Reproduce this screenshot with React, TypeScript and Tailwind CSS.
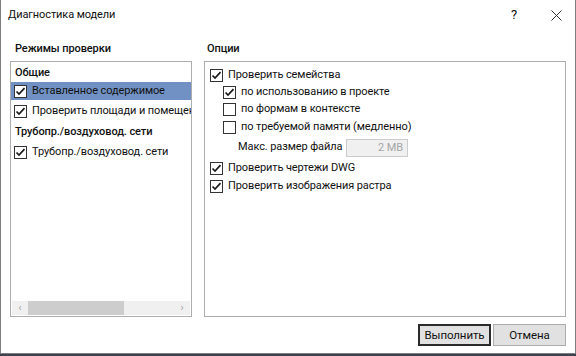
import React from "react";

const font = { fontFamily: 'Roboto, "Noto Sans", Arial, sans-serif' };

function Check({ checked }: { checked: boolean }) {
  return (
    <span className="w-[13px] h-[13px] border border-[#333333] bg-white flex items-center justify-center shrink-0">
      {checked && (
        <svg width="11" height="11" viewBox="0 0 11 11">
          <path d="M1.5 5.5 L4 8 L9.5 2.2" fill="none" stroke="#1a1a1a" strokeWidth="1.7" />
        </svg>
      )}
    </span>
  );
}

function Row({ checked, label, cls }: { checked: boolean; label: string; cls: string }) {
  return (
    <div className={`flex items-center gap-[5px] whitespace-nowrap ${cls}`}>
      <Check checked={checked} />
      <span>{label}</span>
    </div>
  );
}

export default function App() {
  return (
    <div className="w-[576px] h-[356px] bg-[#3c4150] overflow-hidden" style={font}>
      <div className="w-[576px] h-[354px] bg-white border-l border-r border-b border-[#7e7e7e] flex flex-col text-[11px] tracking-[-0.1px] text-[#111111]">
        {/* title bar */}
        <div className="h-[30px] flex items-center pl-[7px] shrink-0">
          <span className="leading-[16px] text-[11px]">Диагностика модели</span>
          <div className="flex-1" />
          <span className="text-[13px] w-[10px] text-center mr-[32px]">?</span>
          <svg width="11" height="11" viewBox="0 0 11 11" className="mr-[13px]">
            <path d="M0.5 0.5 L10.5 10.5 M10.5 0.5 L0.5 10.5" stroke="#333" strokeWidth="1" />
          </svg>
        </div>

        {/* content */}
        <div className="flex pl-[9px] gap-[12px]">
          {/* left */}
          <div className="w-[182px] flex flex-col">
            <div className="h-[31px] pt-[11px] pl-[5px] font-medium leading-[16px]">Режимы проверки</div>
            <div className="h-[256px] border border-[#adadad] flex flex-col overflow-hidden">
              <div className="flex-1 flex flex-col pt-[2px]">
                <div className="h-[18px] flex items-center pl-[4px] font-medium">Общие</div>
                <Row checked label="Вставленное содержимое" cls="h-[18px] pl-[3px] bg-[#7191c4]" />
                <Row checked label="Проверить площади и помещения" cls="h-[20px] pl-[3px] mt-[1px]" />
                <div className="h-[22px] flex items-center pl-[4px] font-medium whitespace-nowrap">Трубопр./воздуховод. сети</div>
                <Row checked label="Трубопр./воздуховод. сети" cls="h-[18px] pl-[3px]" />
              </div>
              <div className="h-[14px] mx-[1px] mb-[1px] bg-[#f0f0f0] flex items-center">
                <span className="w-[16px] text-center text-[#a0a0a0] text-[10px] leading-[14px]">‹</span>
                <div className="w-[96px] h-[14px] bg-[#cdcdcd]" />
                <div className="flex-1" />
                <span className="w-[16px] text-center text-[#a0a0a0] text-[10px] leading-[14px]">›</span>
              </div>
            </div>
          </div>

          {/* right */}
          <div className="w-[362px] flex flex-col">
            <div className="h-[31px] pt-[11px] pl-[3px] font-medium leading-[16px]">Опции</div>
            <div className="h-[256px] border border-[#adadad] flex flex-col pt-[4px] pl-[5px]">
              <Row checked label="Проверить семейства" cls="h-[18px]" />
              <Row checked label="по использованию в проекте" cls="h-[17px] pl-[13px]" />
              <Row checked={false} label="по формам в контексте" cls="h-[17px] pl-[13px]" />
              <Row checked={false} label="по требуемой памяти (медленно)" cls="h-[18px] pl-[13px]" />
              <div className="h-[21px] flex items-center pl-[28px] mt-[1px]">
                <span className="w-[108px] whitespace-nowrap">Макс. размер файла</span>
                <div className="w-[62px] h-[18px] border border-[#cccccc] bg-[#f0f0f0] text-[#a6a6a6] text-right pr-[4px] leading-[16px]">2 MB</div>
              </div>
              <Row checked label="Проверить чертежи DWG" cls="h-[18px] mt-[1px]" />
              <Row checked label="Проверить изображения растра" cls="h-[18px]" />
            </div>
          </div>
        </div>

        {/* buttons */}
        <div className="flex justify-end gap-[2px] pr-[9px] mt-[7px]">
          <button className="w-[73px] h-[22px] border-2 border-[#2b2b2b] bg-[#e1e1e1] text-[11.5px] leading-[16px]">Выполнить</button>
          <button className="w-[73px] h-[22px] border border-[#adadad] bg-[#e1e1e1] text-[11.5px] leading-[16px]">Отмена</button>
        </div>
      </div>
    </div>
  );
}
